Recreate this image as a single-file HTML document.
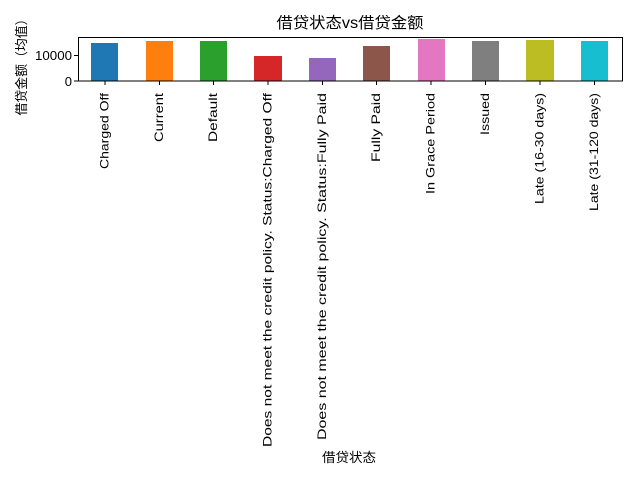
<!DOCTYPE html>
<html><head><meta charset="utf-8"><style>body{margin:0;background:#fff}svg{display:block}text{font-family:"Liberation Sans","WenQuanYi Zen Hei",sans-serif;fill:#000}</style></head>
<body>
<svg width="640" height="480" viewBox="0 0 640 480" xmlns="http://www.w3.org/2000/svg">
<rect width="640" height="480" fill="#fff"/>
<g>
<rect x="91" y="43" width="27" height="38" fill="#1f77b4"/>
<rect x="146" y="41" width="27" height="40" fill="#ff7f0e"/>
<rect x="200" y="41" width="27" height="40" fill="#2ca02c"/>
<rect x="254" y="56" width="28" height="25" fill="#d62728"/>
<rect x="309" y="58" width="27" height="23" fill="#9467bd"/>
<rect x="363" y="46" width="27" height="35" fill="#8c564b"/>
<rect x="418" y="39" width="27" height="42" fill="#e377c2"/>
<rect x="472" y="41" width="27" height="40" fill="#7f7f7f"/>
<rect x="526" y="40" width="28" height="41" fill="#bcbd22"/>
<rect x="581" y="41" width="27" height="40" fill="#17becf"/>
</g>
<rect x="78.5" y="37.5" width="544" height="43.5" fill="none" stroke="#000" stroke-width="1"/>
<g stroke="#000" stroke-width="1">
<line x1="74" y1="81" x2="78" y2="81"/><line x1="74" y1="55.5" x2="78" y2="55.5"/>
<line x1="105" y1="81" x2="105" y2="85"/><line x1="159.5" y1="81" x2="159.5" y2="85"/><line x1="213.5" y1="81" x2="213.5" y2="85"/><line x1="268" y1="81" x2="268" y2="85"/><line x1="322.5" y1="81" x2="322.5" y2="85"/><line x1="376.5" y1="81" x2="376.5" y2="85"/><line x1="431" y1="81" x2="431" y2="85"/><line x1="485.5" y1="81" x2="485.5" y2="85"/><line x1="540" y1="81" x2="540" y2="85"/><line x1="594.5" y1="81" x2="594.5" y2="85"/>
</g>
<text x="72" y="60" font-size="13" text-anchor="end" textLength="37" lengthAdjust="spacingAndGlyphs">10000</text>
<text x="72" y="86" font-size="13" text-anchor="end">0</text>
<text x="350" y="28" font-size="15.5" text-anchor="middle" textLength="147" lengthAdjust="spacingAndGlyphs">借贷状态vs借贷金额</text>
<text x="349" y="462" font-size="13" text-anchor="middle" textLength="54" lengthAdjust="spacingAndGlyphs">借贷状态</text>
<text transform="translate(26,64) rotate(-90)" font-size="13" text-anchor="middle" textLength="103" lengthAdjust="spacingAndGlyphs">借贷金额（均值）</text>
<g font-size="11.6" text-anchor="end" dominant-baseline="central">
<text transform="translate(105,93) rotate(-90)" textLength="76" lengthAdjust="spacingAndGlyphs">Charged Off</text>
<text transform="translate(159.5,93) rotate(-90)" textLength="49" lengthAdjust="spacingAndGlyphs">Current</text>
<text transform="translate(213.5,93) rotate(-90)" textLength="49" lengthAdjust="spacingAndGlyphs">Default</text>
<text transform="translate(268,93) rotate(-90)" textLength="354" lengthAdjust="spacingAndGlyphs">Does not meet the credit policy. Status:Charged Off</text>
<text transform="translate(322.5,93) rotate(-90)" textLength="347" lengthAdjust="spacingAndGlyphs">Does not meet the credit policy. Status:Fully Paid</text>
<text transform="translate(376.5,93) rotate(-90)" textLength="69" lengthAdjust="spacingAndGlyphs">Fully Paid</text>
<text transform="translate(431,93) rotate(-90)" textLength="101" lengthAdjust="spacingAndGlyphs">In Grace Period</text>
<text transform="translate(485.5,93) rotate(-90)" textLength="42" lengthAdjust="spacingAndGlyphs">Issued</text>
<text transform="translate(540,93) rotate(-90)" textLength="111" lengthAdjust="spacingAndGlyphs">Late (16-30 days)</text>
<text transform="translate(594.5,93) rotate(-90)" textLength="118" lengthAdjust="spacingAndGlyphs">Late (31-120 days)</text>
</g>
</svg>
</body></html>
